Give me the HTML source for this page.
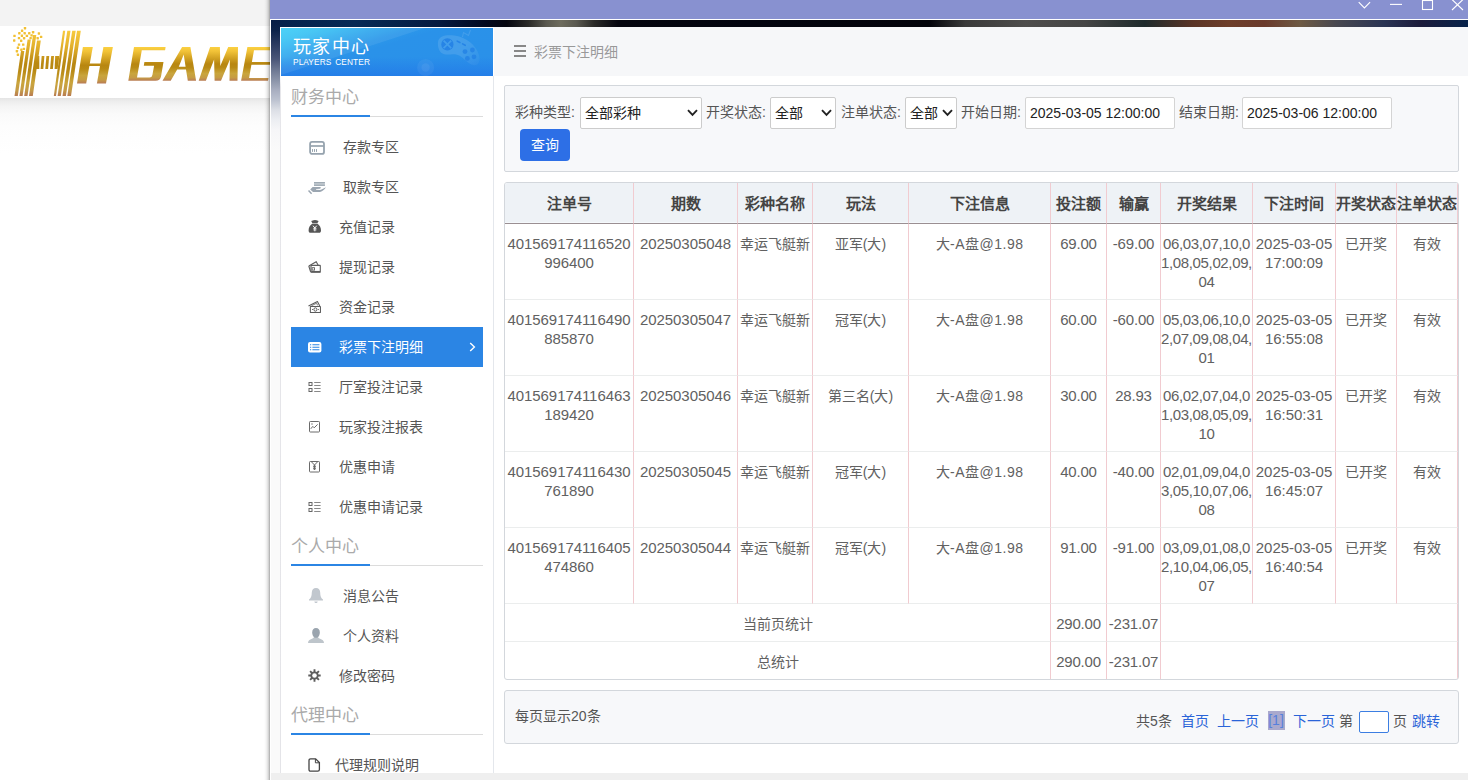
<!DOCTYPE html>
<html lang="zh-CN">
<head>
<meta charset="utf-8">
<title>彩票下注明细</title>
<style>
*{box-sizing:border-box;}
html,body{margin:0;padding:0;}
body{width:1468px;height:780px;overflow:hidden;position:relative;background:#fff;font-family:"Liberation Sans",sans-serif;font-size:14px;color:#555;}
.abs{position:absolute;}
/* left background page */
#ltgray{left:0;top:0;width:270px;height:26px;background:#f3f3f3;}
#ltshadow{left:0;top:98px;width:270px;height:60px;background:linear-gradient(to bottom,#e4e4e4 0,#ececec 3px,#f4f4f4 8px,#fafafa 16px,#fdfdfd 28px,#fff 55px);}
#winshadow{left:264px;top:0;width:6px;height:780px;background:linear-gradient(to right,rgba(0,0,0,0) 0,rgba(0,0,0,.04) 35%,rgba(0,0,0,.14) 70%,rgba(0,0,0,.34) 100%);}
#logo{left:0;top:26px;width:270px;height:72px;}
/* window chrome */
#titlebar{left:270px;top:0;width:1198px;height:19px;background:#8891d0;}
#wline-h{left:270px;top:19px;width:1198px;height:1px;background:#fff;}
#wline-v{left:270px;top:19px;width:1px;height:761px;background:#fff;}
#band{left:271px;top:20px;width:1197px;height:7px;background:linear-gradient(to right,#04204a 0,#062a55 7%,#051a40 14%,#02081e 18%,#05060f 19.7%,#2a2a28 21.5%,#5a5950 23%,#6e6c5e 24.2%,#5a5950 25.5%,#2a2a28 27%,#05060f 29%,#02040f 40%,#02030a 55%,#3a3a3a 58%,#4e4d4c 63%,#454545 68%,#1e2a2c 73%,#5a3426 77%,#6d3e2a 80%,#6a3a2c 83%,#6e5a44 86%,#484850 89%,#2a3454 93%,#1c1c3c 96%,#06224a 100%);}
#strip{left:271px;top:20px;width:9px;height:753px;background:linear-gradient(to bottom,#061c44 0,#0c2249 10px,#2a3a60 24px,#4a5678 39px,#6a7590 49px,#8a93a8 60px,#a8aec0 70px,#bcc2d0 80px,#dcdfe6 90px,#eceef2 100px,#f6f6f8 110px,#fafafa 130px,#fafafa 100%);}
#inner-v{left:280px;top:27px;width:1px;height:746px;background:linear-gradient(to bottom,#fff 0,#fff 49px,#e6e6ea 60px,#e4e4e8 100%);}
#inner-h{left:280px;top:27px;width:214px;height:1px;background:#fff;}
#bottom{left:271px;top:773px;width:1197px;height:7px;background:#efefef;}
/* sidebar */
#sidehead{left:281px;top:28px;width:212px;height:48px;overflow:hidden;background:linear-gradient(to bottom,rgba(34,120,232,0) 0,rgba(34,120,232,0) 60%,rgba(34,120,232,.75) 100%),linear-gradient(163deg,#3fcef7 0,#3ac2f4 12%,#32aaee 25%,#2c98ea 36%,#2a92e9 44%,#2a90e9 100%);}
#sidehead .t1{left:12px;top:8px;font-size:18px;line-height:22px;color:#fff;white-space:nowrap;letter-spacing:1.3px;}
#sidehead .t2{left:12px;top:28px;font-size:8.3px;line-height:12px;color:#fff;white-space:nowrap;letter-spacing:.1px;word-spacing:1.5px;}
#side{left:281px;top:76px;width:212px;height:697px;background:#fff;}
#sideborder{left:493px;top:76px;width:1px;height:697px;background:#e4e7ec;}
.h{left:291px;font-size:17px;line-height:20px;color:#aaa;white-space:nowrap;}
.ul{left:291px;width:192px;height:1px;background:#dcdcdc;}
.ulb{left:291px;width:79px;height:2px;background:#2b85e4;}
.it{left:291px;width:192px;height:40px;line-height:40px;font-size:14px;color:#555;white-space:nowrap;}
.it span{position:absolute;top:0;}
.it svg{position:absolute;}
.it.on{background:#2b85e4;color:#fff;}
/* main */
#mainhead{left:494px;top:27px;width:974px;height:49px;background:#f6f7f9;}
#crumb{left:534px;top:41px;font-size:14px;line-height:22px;color:#999;white-space:nowrap;}
.bar{background:#888;height:2px;width:12px;left:514px;}
#filter{left:504px;top:85px;width:955px;height:87px;background:#f7f8fa;border:1px solid #d3d7dc;border-radius:2px;}
.lb{top:102px;font-size:14px;line-height:20px;color:#555;white-space:nowrap;}
.sel{top:97px;height:32px;background:#fff;border:1px solid #ccc;border-radius:2px;font-size:14px;line-height:30px;color:#222;padding-left:4px;white-space:nowrap;}
.sel svg{position:absolute;right:3px;top:11px;}
.inp{top:97px;height:32px;width:150px;background:#fff;border:1px solid #d4d4d4;border-radius:2px;font-size:14px;line-height:30px;color:#222;padding-left:4px;white-space:nowrap;}
#btn{left:520px;top:129px;width:50px;height:32px;background:#2d6fe6;border-radius:4px;color:#fff;font-size:14px;line-height:32px;text-align:center;}
#tbox{left:504px;top:182px;width:955px;height:498px;border:1px solid #d3d7dc;border-radius:3px;overflow:hidden;background:#fff;}
table{border-collapse:separate;border-spacing:0;table-layout:fixed;width:953px;}
th,td{padding:0;text-align:center;font-size:15px;overflow:hidden;white-space:nowrap;}
th{height:41px;background:linear-gradient(to bottom,#eef2f6 0,#eef2f6 39px,#f5f9fc 39px,#f5f9fc 100%);border-bottom:1px solid #9a8f92;border-right:1px solid #f1cbd0;font-weight:bold;color:#444;line-height:19px;padding-top:1px;}
td{vertical-align:top;padding-top:11px;line-height:19px;font-size:14px;color:#616161;border-right:1px solid #f1cbd0;border-bottom:1px solid #ebeded;}
td.n,td.n2,td.d,td.m{padding-top:10px;}
td.n{font-size:15px;letter-spacing:-.2px;}
td.n2{font-size:15px;letter-spacing:-.07px;}
td.d{font-size:15px;letter-spacing:-.03px;}
td.x{letter-spacing:.5px;}
td.m{font-size:15px;letter-spacing:-.36px;}
tr.r td{height:76px;}
tr.s td{height:38px;}
tr.s td.nb{border-right-color:transparent;}
tr.s:last-child td{border-bottom:0;}
#pager{left:504px;top:690px;width:955px;height:54px;background:#f7f8fa;border:1px solid #d3d7dc;border-radius:3px;}
.pg{top:711px;font-size:14px;line-height:20px;white-space:nowrap;color:#555;}
.pg.a{color:#2a64d8;}
</style>
</head>
<body>
<!-- page behind -->
<div class="abs" id="ltgray"></div>
<div class="abs" id="ltshadow"></div>
<svg class="abs" id="logo" viewBox="0 26 270 72">
<defs>
<linearGradient id="g1" gradientUnits="userSpaceOnUse" x1="0" y1="30" x2="0" y2="96">
<stop offset="0" stop-color="#f9cc3e"/><stop offset=".25" stop-color="#e2b02c"/><stop offset=".5" stop-color="#b98812"/><stop offset=".62" stop-color="#b98a14"/><stop offset=".8" stop-color="#caa43c"/><stop offset=".92" stop-color="#c49a48"/><stop offset="1" stop-color="#b87a52"/>
</linearGradient>
<linearGradient id="g2" gradientUnits="userSpaceOnUse" x1="0" y1="47" x2="0" y2="81">
<stop offset="0" stop-color="#fbd040"/><stop offset=".12" stop-color="#f2c338"/><stop offset=".5" stop-color="#b88610"/><stop offset=".6" stop-color="#b98a14"/><stop offset=".78" stop-color="#c9a53c"/><stop offset=".9" stop-color="#c69c44"/><stop offset="1" stop-color="#b87a55"/>
</linearGradient>
<linearGradient id="g3" gradientUnits="userSpaceOnUse" x1="0" y1="47" x2="0" y2="83.5">
<stop offset="0" stop-color="#fbd040"/><stop offset=".12" stop-color="#f2c338"/><stop offset=".5" stop-color="#b88610"/><stop offset=".6" stop-color="#b98a14"/><stop offset=".78" stop-color="#c9a53c"/><stop offset=".9" stop-color="#c69c44"/><stop offset="1" stop-color="#b87a55"/>
</linearGradient>
</defs>
<g fill="url(#g1)">
<!-- left stem stripes -->
<polygon points="14.5,96 17.8,96 24.3,51 21,51"/>
<polygon points="19.4,96 22.6,96 30.8,39.5 27.6,39.5"/>
<polygon points="24.2,96 27.5,96 36.3,35 33,35"/>
<polygon points="29,96 32.8,96 36.6,69 39.3,69 39.3,56 38.6,56 40.8,40.5 37,40.5"/>
<!-- crossbar -->
<polygon points="40.6,69 43.3,69 44.4,56 41.7,56"/>
<polygon points="45.3,69 48.1,69 49.2,56 46.4,56"/>
<polygon points="50.1,69 52.9,69 54,56 51.2,56"/>
<polygon points="54.6,69 57.6,69 59.4,56 55.2,56"/>
<!-- right stem stripes -->
<polygon points="53.8,96 56,96 65.2,30.8 63,30.8"/>
<polygon points="57.6,96 60.8,96 70.5,30.8 67.3,30.8"/>
<polygon points="62.5,96 65.9,96 75.7,30.8 72.2,30.8"/>
<polygon points="67.3,96 71,96 80.8,30.8 77,30.8"/>
</g>
<g fill="#f1c034">
<rect x="23.8" y="27.1" width="2.4" height="2.4" rx=".4"/>
<rect x="20.9" y="29.6" width="2.4" height="2.4" rx=".4"/>
<rect x="18.1" y="32.0" width="2.4" height="2.4" rx=".4"/>
<rect x="23.5" y="32.0" width="2.4" height="2.4" rx=".4"/>
<rect x="28.0" y="32.0" width="2.4" height="2.4" rx=".4"/>
<rect x="31.9" y="31.0" width="2.4" height="2.4" rx=".4"/>
<rect x="37.7" y="32.3" width="2.4" height="2.4" rx=".4"/>
<rect x="13.3" y="34.7" width="2.4" height="2.4" rx=".4"/>
<rect x="20.7" y="34.5" width="2.4" height="2.4" rx=".4"/>
<rect x="25.7" y="34.7" width="2.4" height="2.4" rx=".4"/>
<rect x="30.4" y="34.2" width="2.4" height="2.4" rx=".4"/>
<rect x="39.9" y="35.7" width="2.4" height="2.4" rx=".4"/>
<rect x="17.8" y="36.9" width="2.4" height="2.4" rx=".4"/>
<rect x="22.9" y="37.1" width="2.4" height="2.4" rx=".4"/>
<rect x="29.4" y="36.9" width="2.4" height="2.4" rx=".4"/>
<rect x="36.5" y="37.1" width="2.4" height="2.4" rx=".4"/>
<rect x="13.0" y="39.3" width="2.4" height="2.4" rx=".4"/>
<rect x="20.0" y="39.6" width="2.4" height="2.4" rx=".4"/>
<rect x="17.8" y="43.4" width="2.4" height="2.4" rx=".4"/>
<rect x="22.0" y="43.4" width="2.4" height="2.4" rx=".4"/>
<rect x="16.7" y="46.6" width="2.4" height="2.4" rx=".4"/>
<rect x="22.7" y="47.7" width="2.4" height="2.4" rx=".4"/>
<rect x="20.2" y="48.6" width="2.4" height="2.4" rx=".4"/>
<rect x="15.7" y="50.0" width="2.4" height="2.4" rx=".4"/>
<rect x="16.7" y="53.5" width="2.4" height="2.4" rx=".4"/>
</g>
<!-- small H -->
<g fill="url(#g3)">
<polygon points="82.9,47.1 92.8,47.1 86.2,83.5 77,83.5"/>
<polygon points="103.4,47.1 112.9,47.1 106,83.5 96.9,83.5"/>
<polygon points="88,63.6 101,63.6 100.6,65.9 87.6,65.9"/>
</g>
<!-- GAME -->
<g fill="url(#g2)">
<!-- G -->
<path d="M134,47.1 L165.6,47.1 L165.1,50.3 L141.8,50.3 L137,77.5 L149.5,77.5 Q152,77.5 152.4,75 L154.1,65.7 L143.8,65.7 L144.4,62.1 L163.5,62.1 L161,76.5 Q160.2,80.7 155.5,80.7 L128.3,80.7 Z"/>
<!-- A -->
<path d="M182.1,47.1 L190.4,47.1 L196.1,80.7 L187.8,80.7 L186,69.4 L177.2,69.4 L170.7,80.7 L162.5,80.7 Z M178.8,66.7 L185.6,66.7 L183.7,54.5 Z"/>
<!-- M -->
<path d="M210.1,47.1 L219.9,47.1 L220.3,66 L228.2,47.1 L238,47.1 L237.5,80.7 L229.5,80.7 L229.9,59.5 L221,80.7 L214.6,80.7 L214.1,59.5 L205.9,80.7 L198.7,80.7 Z"/>
<!-- E -->
<path d="M247.4,47.1 L275,47.1 L275,50.3 L254,50.3 L251.9,62.1 L275,62.1 L275,64.8 L251.4,64.8 L249.1,78 L268.5,78 L268,80.7 L241.1,80.7 Z"/>
</g>
</svg>
<div class="abs" id="winshadow"></div>

<!-- window -->
<div class="abs" id="titlebar">
<svg class="abs" style="left:1080px;top:0" width="118" height="19" viewBox="1350 0 118 19" fill="none" stroke="#fff" stroke-width="1.1">
<polyline points="1358.7,2.2 1364.4,8 1370.1,2.2"/>
<line x1="1390" y1="4.4" x2="1402" y2="4.4"/>
<rect x="1422.5" y="0.5" width="10" height="9"/>
<path d="M1452,-0.5 L1463,10 M1463,-0.5 L1452,10"/>
</svg>
</div>
<div class="abs" id="wline-h"></div>
<div class="abs" id="band"></div>
<div class="abs" id="strip"></div>
<div class="abs" id="wline-v"></div>
<div class="abs" id="mainhead"></div>
<div class="abs" id="inner-v"></div>
<div class="abs" id="inner-h"></div>

<!-- sidebar -->
<div class="abs" id="side"></div>
<div class="abs" id="sideborder"></div>
<div class="abs" id="sidehead">
<svg class="abs" style="left:0;top:0" width="212" height="48" viewBox="281 28 212 48">
<polygon points="281,28 425,28 281,75" fill="#fff" opacity=".075"/>
<defs><linearGradient id="gp" gradientUnits="userSpaceOnUse" x1="440" y1="36" x2="478" y2="66"><stop offset="0" stop-color="#fff" stop-opacity="1"/><stop offset=".55" stop-color="#fff" stop-opacity="1"/><stop offset="1" stop-color="#fff" stop-opacity=".25"/></linearGradient></defs>
<g fill="url(#gp)" opacity=".11">
<path d="M438,42 C438.5,36 446,34.5 454,35.5 C466,37 476,45 479,55 C481,62 478,66.5 473,65 C467,63.5 463,56.5 457,54.8 C452,53.5 448,55.5 443.5,54 C439,52.5 437.5,47 438,42 Z"/>
<path d="M462.5,37 L463.5,32.5 L468.5,35.5 L470.5,30" fill="none" stroke="#fff" stroke-width="1.1"/>
</g>
<circle cx="425.6" cy="67.5" r="8.6" fill="#fff" opacity=".05"/>
<circle cx="425.6" cy="67.5" r="4.2" fill="#fff" opacity=".06"/>
<g fill="#2382e6" opacity=".9">
<circle cx="447.4" cy="44.4" r="6.1"/>
<rect x="456.2" y="41" width="4.6" height="1.6" rx=".8" transform="rotate(28 458.5 41.8)"/>
<rect x="461.6" y="43.8" width="4.6" height="1.6" rx=".8" transform="rotate(28 463.9 44.6)"/>
</g>
<g fill="#2382e6" opacity=".8">
<circle cx="465" cy="51.6" r="2.4"/><circle cx="472.4" cy="50" r="2.4"/><circle cx="467.4" cy="58.4" r="2.4"/><circle cx="474" cy="56.8" r="2.4"/>
</g>
<path d="M443.6,40.6 L451.2,48.2 M451.2,40.6 L443.6,48.2" stroke="#4aa6ef" stroke-width="1.7" opacity=".75"/>
</svg>
<div class="abs t1">玩家中心</div>
<div class="abs t2">PLAYERS CENTER</div>
</div>

<div class="abs h" style="top:87.5px">财务中心</div>
<div class="abs ul" style="top:116px"></div><div class="abs ulb" style="top:115px"></div>

<div class="abs it" style="top:127px"><svg style="left:18px;top:14px" width="16" height="14" viewBox="0 0 16 14" fill="none" stroke="#96a3ae" stroke-width="1.8"><rect x="1.1" y=".9" width="13.9" height="12.05" rx="2"/><line x1="1" y1="5" x2="15" y2="5" stroke-width="1.7"/><path d="M3.5,8.5v2M5.5,8.5v2M7.5,8.5v2" stroke-width="1" stroke-linecap="round"/></svg><span style="left:52px">存款专区</span></div>
<div class="abs it" style="top:167px"><svg style="left:17px;top:15px" width="19" height="13" viewBox="0 0 19 13"><rect x="6" y="0" width="10.9" height="3.8" fill="#bcc4cb"/><path d="M6,.45h10.9M6,3.35h10.9" stroke="#9aa5af" stroke-width=".9"/><path d="M4.6,5.1 L12.8,5.1 L12.3,6.7 L8,6.9 L8.2,7.8 L12,7.9 C14,7.6 16,6 17.8,5.3 C17.2,7.2 14.5,9.4 12,10 L5,10 L2.2,7.4 Z" fill="#9ba6b1"/><path d="M0.5,8.5 L3.6,11.8" stroke="#9ba6b1" stroke-width="1.5" fill="none"/></svg><span style="left:52px">取款专区</span></div>
<div class="abs it" style="top:207px"><svg style="left:17px;top:13px" width="14" height="13" viewBox="0 0 14 13" fill="#555"><path d="M3.2,0.9 L5.5,0.3 L7,0 L8.5,0.3 L10.6,0.9 L9.4,3.3 L4.4,3.3 Z"/><path d="M4.3,3.65 L9.5,3.65 C11.6,5.1 13.1,7.5 13,10.5 C12.95,12 12.3,12.8 11,12.8 L2.6,12.8 C1.3,12.8 0.65,12 0.6,10.5 C0.5,7.5 2,5.1 4.3,3.7 Z"/><path d="M5,5.7 L6.85,8 L8.7,5.7 M6.85,8 V11.3" stroke="#fff" stroke-width="1" fill="none"/><path d="M5.2,8.4 H8.5 M5.2,9.9 H8.5" stroke="#fff" stroke-width=".7" fill="none"/></svg><span style="left:48px">充值记录</span></div>
<div class="abs it" style="top:247px"><svg style="left:17px;top:14px" width="14" height="12" viewBox="0 0 14 12" fill="none" stroke="#5c5c5c" stroke-width="1.1"><path d="M0.8,5 L8.2,0.7 L10.2,4.2"/><path d="M0.8,5 L2.6,10.8"/><rect x="3" y="4.4" width="9.3" height="6.8" rx=".3"/><rect x="4.1" y="6.7" width="2.4" height="2.4" stroke-width=".9"/><line x1="3.2" y1="10.7" x2="12" y2="10.7" stroke-width="1.5"/></svg><span style="left:48px">提现记录</span></div>
<div class="abs it" style="top:287px"><svg style="left:17px;top:14px" width="14" height="12" viewBox="0 0 14 12" fill="none" stroke="#5c5c5c" stroke-width="1.05"><path d="M0.5,5 L9.4,0.5 L11.8,5"/><path d="M3.4,4.8 L8.6,2.2 L9.6,4.4" stroke-width=".8"/><rect x="2.35" y="5.4" width="10.1" height="6.2" rx=".3"/><ellipse cx="7.4" cy="8.5" rx="1.5" ry="1.7" stroke-width="1"/><path d="M4,8.5h.9M9.9,8.5h.9" stroke-width="1.1"/></svg><span style="left:48px">资金记录</span></div>
<div class="abs it on" style="top:327px"><svg style="left:17px;top:14.7px" width="14" height="11" viewBox="0 0 14 11"><rect x="0" y="0" width="13.4" height="10.4" rx="2" fill="#fff"/><path d="M4.4,2.7h7M4.4,5.2h7M4.4,7.7h7" stroke="#2b85e4" stroke-width="1.1"/><path d="M2,2.7h1.2M2,5.2h1.2M2,7.7h1.2" stroke="#2b85e4" stroke-width="1.1"/></svg><span style="left:48px">彩票下注明细</span><svg style="left:178px;top:14.5px" width="7" height="10" viewBox="0 0 7 10" fill="none" stroke="#fff" stroke-width="1.4"><polyline points="1.2,1 5.4,5 1.2,9"/></svg></div>
<div class="abs it" style="top:367px"><svg style="left:17px;top:14px" width="14" height="12" viewBox="0 0 14 12" fill="none" stroke="#666" stroke-width="1"><rect x="1" y="1.5" width="3" height="3"/><rect x="1" y="7.5" width="3" height="3"/><path d="M6.2,1.5h6.4M6.2,4.5h6.4M6.2,7.5h6.4M6.2,10.5h6.4" stroke="#888"/></svg><span style="left:48px">厅室投注记录</span></div>
<div class="abs it" style="top:407px"><svg style="left:17px;top:14px" width="13" height="12" viewBox="0 0 13 12" fill="none" stroke="#6a6a6a" stroke-width="1"><rect x="1.5" y=".5" width="10" height="10.5" rx=".8"/><polyline points="2.8,7.8 4.8,5.4 6.2,6.8 9.6,3.4" stroke-width="1"/><circle cx="4" cy="3" r=".7" fill="#666" stroke="none"/></svg><span style="left:48px">玩家投注报表</span></div>
<div class="abs it" style="top:447px"><svg style="left:17px;top:14px" width="13" height="12" viewBox="0 0 13 12" fill="none" stroke="#6a6a6a" stroke-width="1"><rect x="1.5" y=".5" width="10" height="10.5" rx=".8"/><path d="M3.6,1 L6.5,4 L9.4,1" stroke-width="1"/><path d="M6.5,4 V9" stroke-width="1.6"/><path d="M5,5.6h3M5,7.4h3" stroke-width=".8"/></svg><span style="left:48px">优惠申请</span></div>
<div class="abs it" style="top:487px"><svg style="left:17px;top:14px" width="14" height="12" viewBox="0 0 14 12" fill="none" stroke="#666" stroke-width="1"><rect x="1" y="1.5" width="3" height="3"/><rect x="1" y="7.5" width="3" height="3"/><path d="M6.2,1.5h6.4M6.2,4.5h6.4M6.2,7.5h6.4M6.2,10.5h6.4" stroke="#888"/></svg><span style="left:48px">优惠申请记录</span></div>

<div class="abs h" style="top:536.5px">个人中心</div>
<div class="abs ul" style="top:565px"></div><div class="abs ulb" style="top:564px"></div>
<div class="abs it" style="top:576px"><svg style="left:17px;top:12px" width="16" height="16" viewBox="0 0 16 16" fill="#c1c7ce"><path d="M8,0 C10.6,0 12.2,2 12.2,4.6 C12.2,8.6 13.2,10.4 15,11.6 L15,12.4 L1,12.4 L1,11.6 C2.8,10.4 3.8,8.6 3.8,4.6 C3.8,2 5.4,0 8,0 Z"/><path d="M6.3,13.4 L9.7,13.4 C9.5,14.6 8.8,15 8,15 C7.2,15 6.5,14.6 6.3,13.4 Z"/></svg><span style="left:52px">消息公告</span></div>
<div class="abs it" style="top:616px"><svg style="left:17px;top:12px" width="16" height="16" viewBox="0 0 16 16"><path d="M0,15 C0,12.6 1.6,11.6 4,10.8 C5.6,10.2 6,9.6 6,8.8 L10,8.8 C10,9.6 10.4,10.2 12,10.8 C14.4,11.6 16,12.6 16,15 Z" fill="#bec5cb"/><path d="M8,0 C10.4,0 11.8,1.8 11.8,4.4 C11.8,7.4 10.2,9.8 8,9.8 C5.8,9.8 4.2,7.4 4.2,4.4 C4.2,1.8 5.6,0 8,0 Z" fill="#9aa4ae"/></svg><span style="left:52px">个人资料</span></div>
<div class="abs it" style="top:656px"><svg style="left:17px;top:12.6px" width="13" height="13" viewBox="0 0 13 13"><g stroke="#5e5e5e" stroke-width="1.9" stroke-linecap="butt"><path d="M6.5,0.3V12.7M0.3,6.5H12.7M2.1,2.1L10.9,10.9M10.9,2.1L2.1,10.9"/></g><circle cx="6.5" cy="6.5" r="4.1" fill="#5e5e5e"/><circle cx="6.5" cy="6.5" r="2.3" fill="#fff"/></svg><span style="left:48px">修改密码</span></div>

<div class="abs h" style="top:705.5px">代理中心</div>
<div class="abs ul" style="top:734px"></div><div class="abs ulb" style="top:733px"></div>
<div class="abs it" style="top:745px;height:28px;overflow:hidden"><svg style="left:17px;top:13px" width="13" height="14" viewBox="0 0 13 14" fill="none" stroke="#444" stroke-width="1.3"><path d="M2.6,.8 H7.6 L11.4,4.6 V11.6 Q11.4,13.2 9.8,13.2 H2.6 Q1,13.2 1,11.6 V2.4 Q1,.8 2.6,.8 Z"/><path d="M7.4,1 V4.8 H11.2" stroke-width="1"/></svg><span style="left:44px">代理规则说明</span></div>

<!-- main header -->
<div class="abs bar" style="top:45px"></div><div class="abs bar" style="top:50px"></div><div class="abs bar" style="top:55px"></div>
<div class="abs" id="crumb">彩票下注明细</div>

<!-- filter -->
<div class="abs" id="filter"></div>
<div class="abs lb" style="left:515px">彩种类型:</div>
<div class="abs sel" style="left:580px;width:122px">全部彩种<svg width="11" height="8" viewBox="0 0 11 8" fill="none" stroke="#222" stroke-width="1.9"><polyline points="1,1.2 5.5,5.8 10,1.2"/></svg></div>
<div class="abs lb" style="left:706px">开奖状态:</div>
<div class="abs sel" style="left:770px;width:66px">全部<svg width="11" height="8" viewBox="0 0 11 8" fill="none" stroke="#222" stroke-width="1.9"><polyline points="1,1.2 5.5,5.8 10,1.2"/></svg></div>
<div class="abs lb" style="left:841px">注单状态:</div>
<div class="abs sel" style="left:905px;width:52px">全部<svg width="11" height="8" viewBox="0 0 11 8" fill="none" stroke="#222" stroke-width="1.9"><polyline points="1,1.2 5.5,5.8 10,1.2"/></svg></div>
<div class="abs lb" style="left:961px">开始日期:</div>
<div class="abs inp" style="left:1025px">2025-03-05 12:00:00</div>
<div class="abs lb" style="left:1179px">结束日期:</div>
<div class="abs inp" style="left:1242px">2025-03-06 12:00:00</div>
<div class="abs" id="btn">查询</div>

<!-- table -->
<div class="abs" id="tbox">
<table>
<colgroup><col style="width:129px"><col style="width:104px"><col style="width:75px"><col style="width:96px"><col style="width:142px"><col style="width:56px"><col style="width:54px"><col style="width:92px"><col style="width:83px"><col style="width:61px"><col style="width:61px"></colgroup>
<tr><th>注单号</th><th>期数</th><th>彩种名称</th><th>玩法</th><th>下注信息</th><th>投注额</th><th>输赢</th><th>开奖结果</th><th>下注时间</th><th>开奖状态</th><th>注单状态</th></tr>
<tr class="r"><td class="n2">401569174116520<br>996400</td><td class="n2">20250305048</td><td>幸运飞艇新</td><td>亚军(大)</td><td class="x">大-A盘@1.98</td><td class="n">69.00</td><td class="n">-69.00</td><td class="m">06,03,07,10,0<br>1,08,05,02,09,<br>04</td><td class="d">2025-03-05<br>17:00:09</td><td>已开奖</td><td>有效</td></tr>
<tr class="r"><td class="n2">401569174116490<br>885870</td><td class="n2">20250305047</td><td>幸运飞艇新</td><td>冠军(大)</td><td class="x">大-A盘@1.98</td><td class="n">60.00</td><td class="n">-60.00</td><td class="m">05,03,06,10,0<br>2,07,09,08,04,<br>01</td><td class="d">2025-03-05<br>16:55:08</td><td>已开奖</td><td>有效</td></tr>
<tr class="r"><td class="n2">401569174116463<br>189420</td><td class="n2">20250305046</td><td>幸运飞艇新</td><td>第三名(大)</td><td class="x">大-A盘@1.98</td><td class="n">30.00</td><td class="n">28.93</td><td class="m">06,02,07,04,0<br>1,03,08,05,09,<br>10</td><td class="d">2025-03-05<br>16:50:31</td><td>已开奖</td><td>有效</td></tr>
<tr class="r"><td class="n2">401569174116430<br>761890</td><td class="n2">20250305045</td><td>幸运飞艇新</td><td>冠军(大)</td><td class="x">大-A盘@1.98</td><td class="n">40.00</td><td class="n">-40.00</td><td class="m">02,01,09,04,0<br>3,05,10,07,06,<br>08</td><td class="d">2025-03-05<br>16:45:07</td><td>已开奖</td><td>有效</td></tr>
<tr class="r"><td class="n2">401569174116405<br>474860</td><td class="n2">20250305044</td><td>幸运飞艇新</td><td>冠军(大)</td><td class="x">大-A盘@1.98</td><td class="n">91.00</td><td class="n">-91.00</td><td class="m">03,09,01,08,0<br>2,10,04,06,05,<br>07</td><td class="d">2025-03-05<br>16:40:54</td><td>已开奖</td><td>有效</td></tr>
<tr class="s"><td colspan="5">当前页统计</td><td class="n">290.00</td><td class="n">-231.07</td><td colspan="4"></td></tr>
<tr class="s"><td colspan="5">总统计</td><td class="n">290.00</td><td class="n">-231.07</td><td colspan="4"></td></tr>
</table>
</div>

<!-- pager -->
<div class="abs" id="pager"></div>
<div class="abs pg" style="left:515px;top:706px">每页显示20条</div>
<div class="abs pg" style="left:1136px">共5条</div>
<div class="abs pg a" style="left:1181px">首页</div>
<div class="abs pg a" style="left:1217px">上一页</div>
<div class="abs pg a" style="left:1267.5px;background:#a9a9cd;color:#5680dc;width:17px;text-align:center;top:711px;height:19px;line-height:19px">[1]</div>
<div class="abs pg a" style="left:1293px">下一页</div>
<div class="abs pg" style="left:1339px">第</div>
<div class="abs" style="left:1359px;top:711px;width:30px;height:22px;border:1px solid #3c7ee2;border-radius:2px;background:#fff"></div>
<div class="abs pg" style="left:1393px">页</div>
<div class="abs pg a" style="left:1412px">跳转</div>

<div class="abs" id="bottom"></div>
</body>
</html>
